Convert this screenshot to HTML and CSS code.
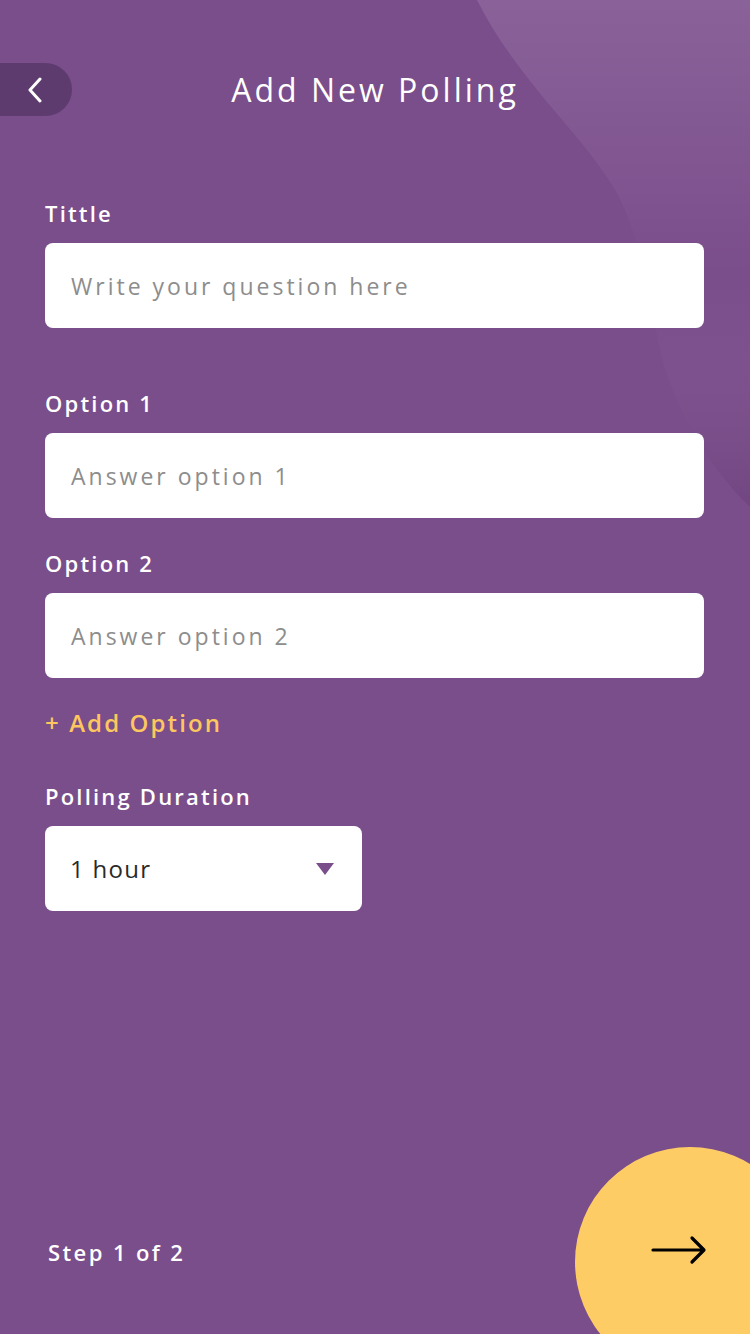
FILE: index.html
```html
<!DOCTYPE html>
<html lang="en">
<head>
<meta charset="utf-8">
<title>Add New Polling</title>
<link rel="stylesheet" href="styles.css">
</head>
<body>
<div class="page">
  <svg class="blob" width="300" height="520" viewBox="450 0 300 520" aria-hidden="true">
    <defs>
      <linearGradient id="bg" x1="0" y1="0" x2="0" y2="1">
        <stop offset="0" stop-color="#ffffff" stop-opacity="0.12"/>
        <stop offset="0.55" stop-color="#ffffff" stop-opacity="0.0"/>
        <stop offset="1" stop-color="#2a0f3a" stop-opacity="0.12"/>
      </linearGradient>
    </defs>
    <path d="M477,0 C520,85 585,135 618,195 C648,255 652,330 667,375 C688,435 720,478 750,507 L750,0 Z" fill="url(#bg)"/>
  </svg>

  <header class="header">
    <button class="back" aria-label="Back">
      <svg width="16" height="26" viewBox="0 0 16 26"><path d="M13 2 L3 13 L13 24" fill="none" stroke="#fff" stroke-width="3" stroke-linecap="round" stroke-linejoin="round"/></svg>
    </button>
    <h1 class="title">Add New Polling</h1>
    <span></span>
  </header>

  <main class="form">
    <label class="label first">Tittle</label>
    <input class="field" type="text" placeholder="Write your question here">

    <label class="label gap-lg">Option 1</label>
    <input class="field" type="text" placeholder="Answer option 1">

    <label class="label gap-md">Option 2</label>
    <input class="field" type="text" placeholder="Answer option 2">

    <div class="add-option">+ Add Option</div>

    <label class="label gap-dur">Polling Duration</label>
    <div class="select">
      <span class="select-value">1 hour</span>
      <span class="caret"></span>
    </div>
  </main>

  <footer class="footer">
    <span class="step">Step 1 of 2</span>
  </footer>

  <button class="next" aria-label="Next">
    <svg width="56" height="30" viewBox="0 0 56 30"><path d="M2 15 H52 M41 3 L53 15 L41 27" fill="none" stroke="#000" stroke-width="3.2" stroke-linecap="round" stroke-linejoin="round"/></svg>
  </button>
</div>
</body>
</html>
```

FILE: styles.css
```css
* { box-sizing: border-box; }
html, body { margin: 0; padding: 0; }
body {
  background: #7a4d8b;
  font-family: "Open Sans", "Lato", sans-serif;
}
.page {
  position: relative;
  width: 750px;
  height: 1334px;
  overflow: hidden;
  background: #7a4d8b;
  display: flex;
  flex-direction: column;
}
.blob {
  position: absolute;
  top: 0;
  right: 0;
  pointer-events: none;
}
.header {
  position: relative;
  margin-top: 63px;
  height: 53px;
  display: grid;
  grid-template-columns: 72px 1fr 72px;
  align-items: center;
}
.back {
  width: 72px;
  height: 53px;
  border: 0;
  padding: 0;
  background: #5e3b6f;
  border-radius: 0 27px 27px 0;
  display: flex;
  align-items: center;
  justify-content: center;
}
.back svg { margin-left: -2px; }
.title {
  margin: 0;
  text-align: center;
  color: #fff;
  font-weight: 400;
  font-size: 32px;
  letter-spacing: 3px;
  line-height: 40px;
}
.form {
  position: relative;
  display: flex;
  flex-direction: column;
  padding: 0 46px 0 45px;
}
.label {
  color: #fff;
  font-size: 22px;
  line-height: 26px;
  font-weight: 600;
  letter-spacing: 2.2px;
  margin-bottom: 17px;
}
.label.first { margin-top: 84px; }
.label.gap-lg { margin-top: 62px; }
.label.gap-md { margin-top: 32px; }
.label.gap-dur { margin-top: 46px; }
.field {
  height: 85px;
  width: 100%;
  border: 0;
  border-radius: 8px;
  background: #fff;
  padding: 0 26px;
  font-family: inherit;
  font-size: 23px;
  letter-spacing: 3px;
  color: #333;
  outline: none;
}
.field::placeholder { color: #8d8d8d; }
.add-option {
  margin-top: 31px;
  color: #fcc75f;
  font-size: 24px;
  line-height: 28px;
  font-weight: 600;
  letter-spacing: 2.1px;
}
.select {
  width: 317px;
  height: 85px;
  background: #fff;
  border-radius: 8px;
  display: flex;
  align-items: center;
  justify-content: space-between;
  padding: 0 28px 0 25px;
}
.select-value {
  color: #2a2a2a;
  font-size: 24px;
  letter-spacing: 1.3px;
}
.caret {
  width: 0;
  height: 0;
  border-left: 9px solid transparent;
  border-right: 9px solid transparent;
  border-top: 12px solid #7a4d8b;
}
.footer {
  margin-top: auto;
  padding: 0 0 68px 48px;
}
.step {
  color: #fff;
  font-size: 22px;
  line-height: 26px;
  font-weight: 600;
  letter-spacing: 2.4px;
}
.next {
  position: absolute;
  left: 575px;
  top: 1147px;
  width: 230px;
  height: 230px;
  border: 0;
  border-radius: 50%;
  background: #fecc65;
  padding: 88px 0 0 76px;
  display: flex;
  align-items: flex-start;
}
```
